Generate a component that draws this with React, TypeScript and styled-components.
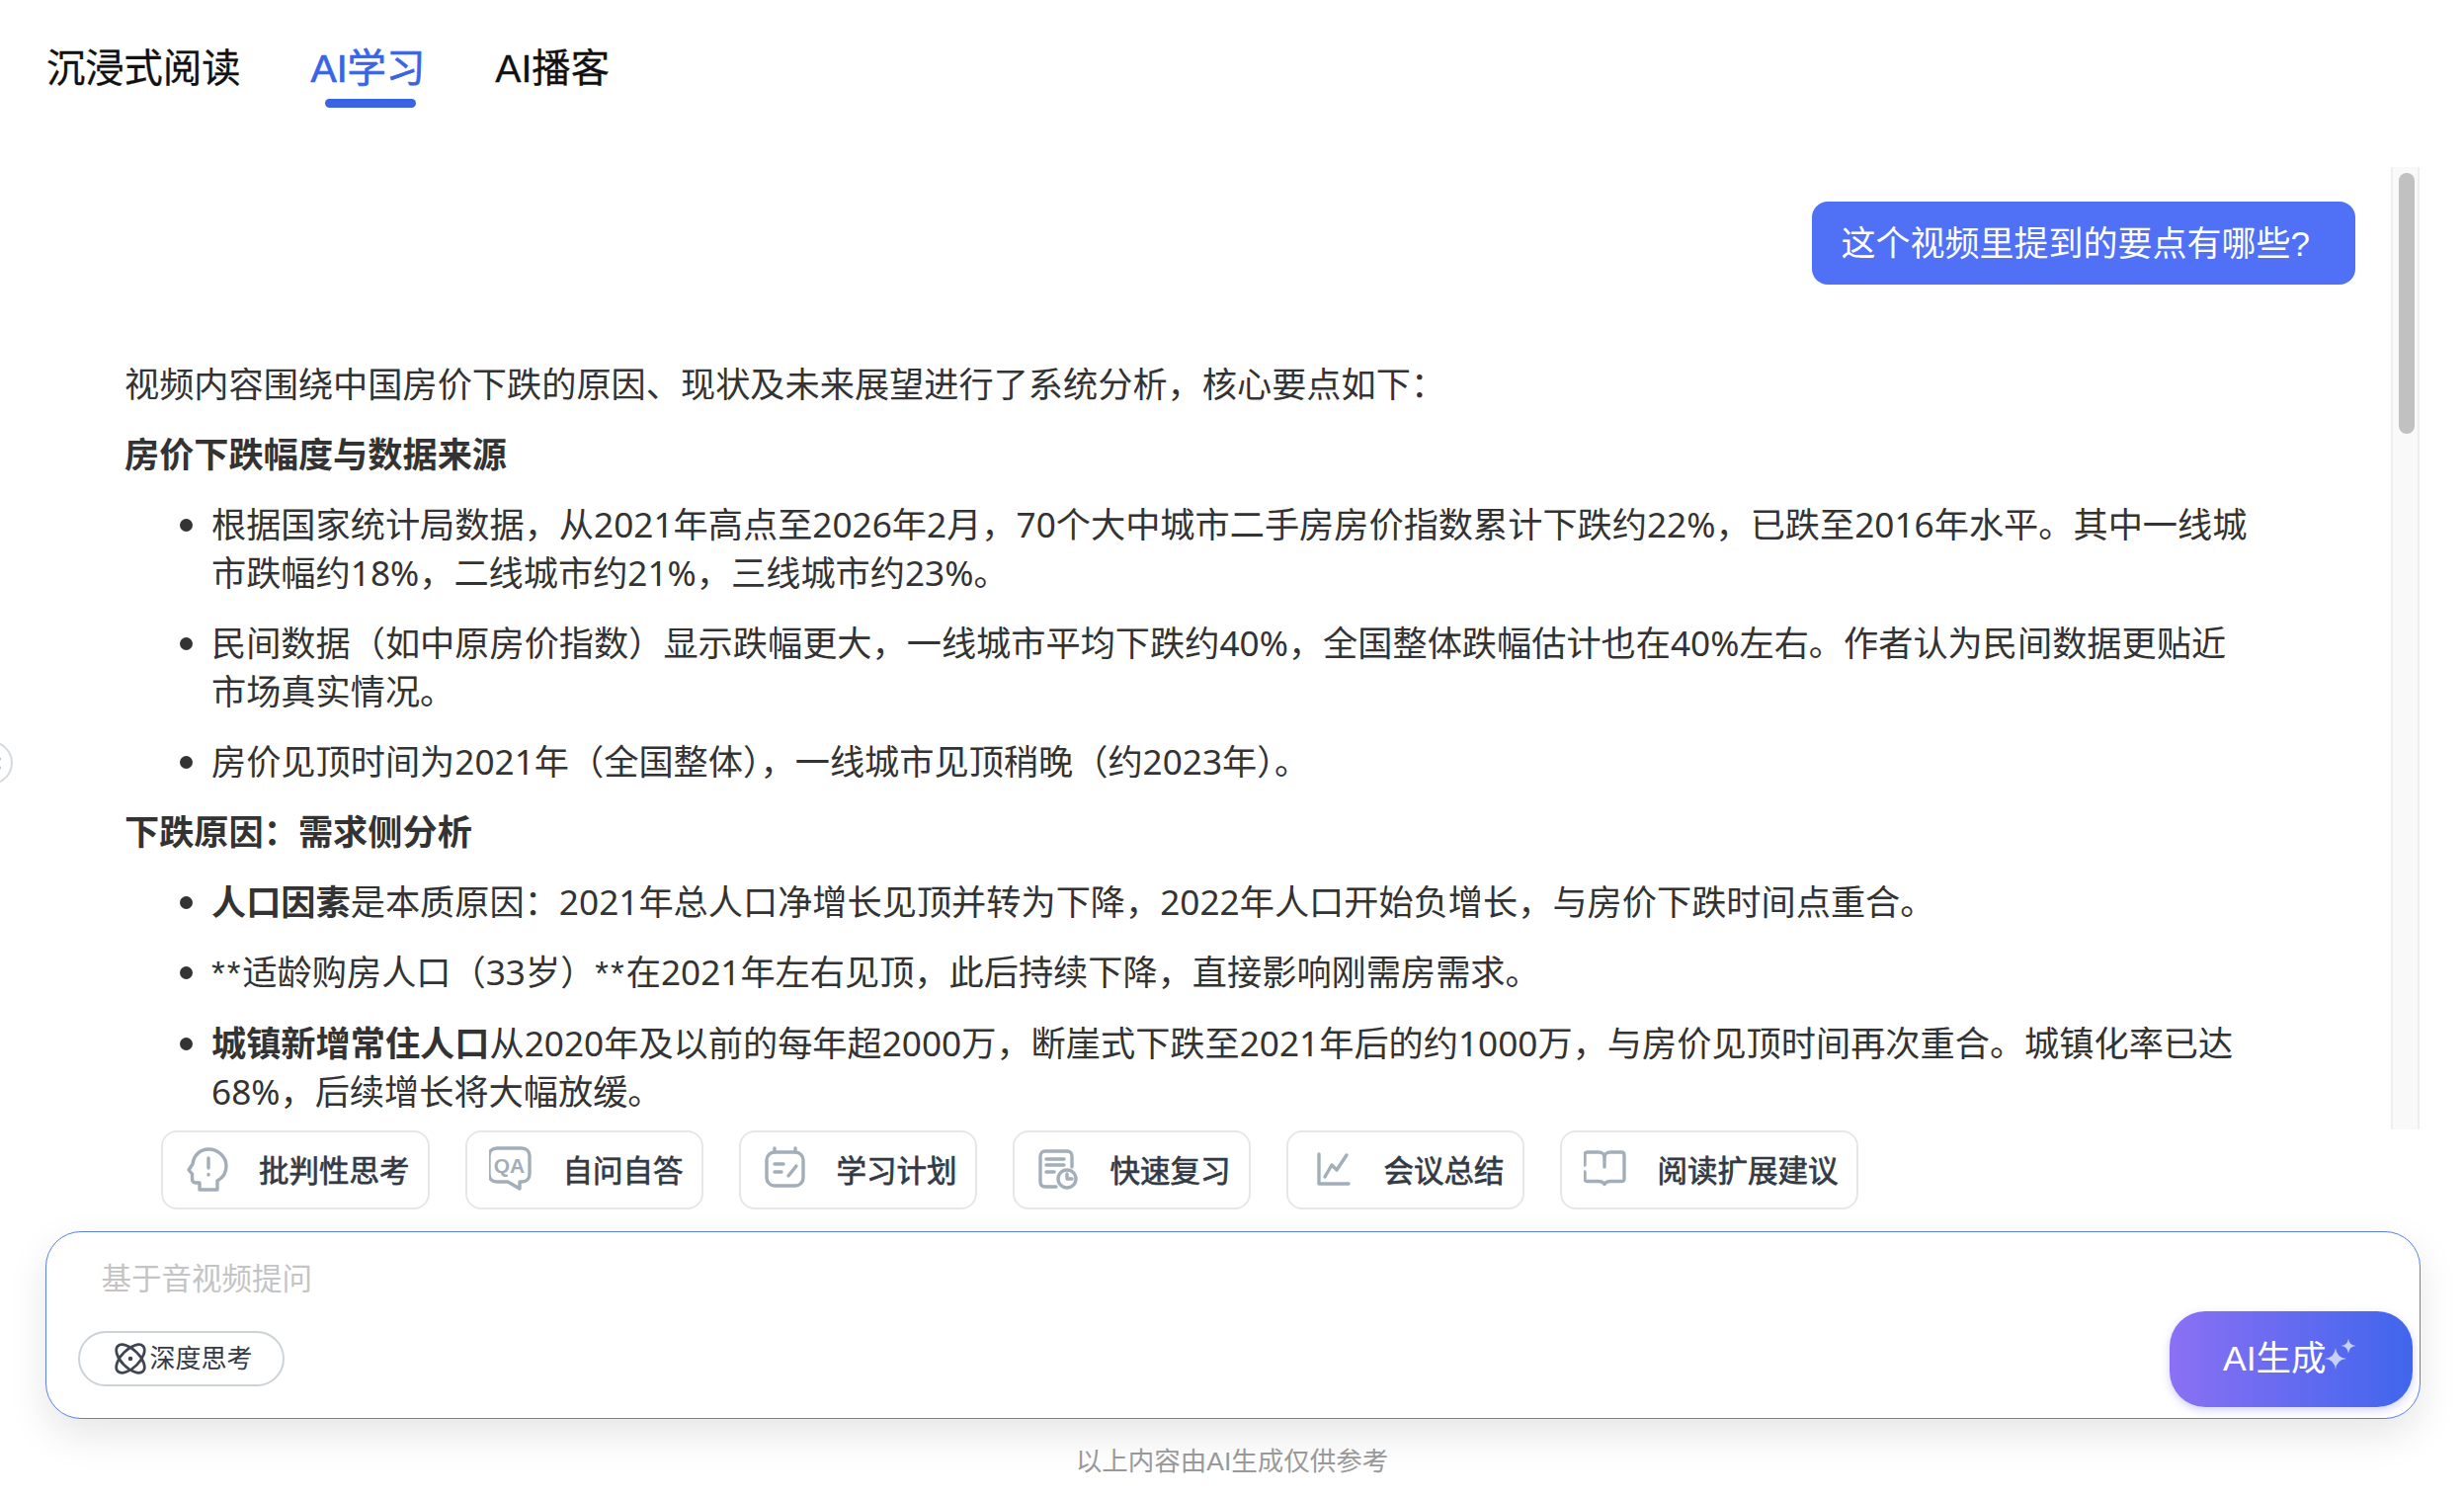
import React from 'react';
import styled, { createGlobalStyle } from 'styled-components';

const GlobalStyle = createGlobalStyle`
  html, body {
    margin: 0;
    padding: 0;
    background: #fff;
  }
  body {
    font-family: "Liberation Sans", "Noto Sans CJK SC", sans-serif;
  }
`;

const Page = styled.div`
  position: relative;
  width: 2494px;
  height: 1516px;
  overflow: hidden;
  background: #fff;
  display: flex;
  flex-direction: column;
`;

const TabBar = styled.nav`
  height: 169px;
  box-sizing: border-box;
  padding: 41px 0 0 47px;
  display: flex;
  gap: 71px;
  align-items: flex-start;
`;

const Tab = styled.div<{ $active?: boolean }>`
  display: flex;
  flex-direction: column;
  font-size: 39.3px;
  line-height: 56px;
  -webkit-text-stroke: ${(p) => (p.$active ? '0.7px #3b64e4' : '0.3px #111')};
  color: ${(p) => (p.$active ? '#3b64e4' : '#111')};

  &::after {
    content: '';
    display: block;
    width: 92px;
    height: 9px;
    margin: 3px 0 0 15px;
    border-radius: 5px;
    background: ${(p) => (p.$active ? '#3b64e4' : 'transparent')};
  }
`;

const ChatRow = styled.div`
  height: 974px;
  display: flex;
  overflow: hidden;
`;

const Messages = styled.div`
  flex: 1;
  min-width: 0;
  box-sizing: border-box;
  padding: 35px 36px 0 126px;
  color: #333;
  font-size: 35px;
  line-height: 49px;
`;

const UserBubble = styled.div`
  width: fit-content;
  height: 84px;
  margin-left: auto;
  margin-bottom: 76px;
  padding: 0 46px 0 30px;
  display: flex;
  align-items: center;
  border-radius: 16px;
  background: #5070f6;
  color: #fff;
`;

const Answer = styled.div`
  padding-right: 100px;
  font-family: "Noto Sans", "Noto Sans CJK SC", sans-serif;
  font-size: 35.2px;
`;

const Para = styled.p`
  margin: 0 0 22px;
`;

const BulletList = styled.ul`
  margin: 0 0 22px;
  padding-left: 88px;
  list-style: disc;
`;

const Bullet = styled.li`
  margin-bottom: 22px;

  &:last-child {
    margin-bottom: 0;
  }
`;

const Strong = styled.strong`
  font-weight: 700;
`;

const Stars = styled.span`
  font-family: "Liberation Sans", sans-serif;
  letter-spacing: 2px;
`;

const ScrollTrack = styled.div`
  width: 29px;
  margin-right: 45px;
  box-sizing: border-box;
  border-left: 2px solid #eeeeee;
  border-right: 2px solid #eeeeee;
  background: #f9f9f9;
`;

const ScrollThumb = styled.div`
  width: 16px;
  height: 264px;
  margin: 6px 0 0 6px;
  border-radius: 8px;
  background: #c1c1c1;
`;

const ChipRow = styled.div`
  display: flex;
  gap: 36px;
  margin-top: 1px;
  padding-left: 163px;
`;

const Chip = styled.button`
  height: 80px;
  box-sizing: border-box;
  padding: 0 18px 2px 22px;
  display: flex;
  align-items: center;
  gap: 27px;
  border: 2px solid #e5e7eb;
  border-radius: 16px;
  background: #fff;
  color: #333a45;
  font-family: inherit;
  font-size: 30.5px;
  font-weight: 400;
  -webkit-text-stroke: 0.7px #333a45;
`;

const ChipIcon = styled.svg`
  width: 48px;
  height: 48px;
  flex: none;
  fill: none;
  stroke: #a3aebb;
  stroke-width: 3.4;
  stroke-linecap: round;
  stroke-linejoin: round;
`;

const Composer = styled.div`
  height: 190px;
  box-sizing: border-box;
  margin: 22px 44px 0 46px;
  padding: 0 7px 11.5px 31.5px;
  display: flex;
  justify-content: space-between;
  align-items: flex-end;
  border: 1.5px solid #5a80e8;
  border-radius: 36px;
  background: #fff;
  box-shadow: 0 16px 40px rgba(0, 0, 0, 0.1);
`;

const ComposerLeft = styled.div`
  display: flex;
  flex-direction: column;
  align-items: flex-start;
  padding-bottom: 21px;
`;

const PromptInput = styled.input`
  width: 1800px;
  height: 40px;
  margin: 0 0 32px 24px;
  padding: 0;
  border: 0;
  outline: 0;
  background: transparent;
  font-family: inherit;
  font-size: 30.5px;

  &::placeholder {
    color: #c4c4c4;
    opacity: 1;
  }
`;

const ThinkPill = styled.div`
  height: 56px;
  box-sizing: border-box;
  padding: 0 30px 4px 34px;
  display: flex;
  align-items: center;
  gap: 3px;
  border: 2px solid #cdd2da;
  border-radius: 28px;
  color: #333a45;
  font-size: 26px;
`;

const AtomIcon = styled.svg`
  width: 34px;
  height: 34px;
  margin-top: 4px;
  fill: none;
  stroke: #3f4652;
  stroke-width: 2.6;
`;

const GenerateButton = styled.button`
  width: 246px;
  height: 97px;
  padding: 0 0 7px 54px;
  display: flex;
  align-items: center;
  border: 0;
  border-radius: 36px;
  background: linear-gradient(90deg, #8b70f4 0%, #3f66ec 100%);
  box-shadow: 0 3px 8px rgba(100, 100, 240, 0.3);
  color: #fff;
  font-family: inherit;
  font-size: 35.5px;
`;

const Sparkles = styled.svg`
  width: 36px;
  height: 36px;
  margin: 0 0 0 -3px;
  fill: #c9d0f8;
`;

const Disclaimer = styled.div`
  margin-top: 25px;
  text-align: center;
  color: #999;
  font-size: 26.5px;
  line-height: 36px;
`;

const SideHandle = styled.div`
  position: absolute;
  left: -31px;
  top: 750px;
  width: 44px;
  height: 44px;
  box-sizing: border-box;
  padding-right: 10px;
  display: flex;
  flex-direction: column;
  align-items: flex-end;
  justify-content: center;
  gap: 5px;
  border: 2px solid #d5d9e0;
  border-radius: 50%;
  background: #fff;
`;

const HandleDot = styled.span`
  width: 4px;
  height: 4px;
  border-radius: 50%;
  background: #b9bec8;
`;

export default function App() {
  return (
    <Page>
      <GlobalStyle />
      <TabBar>
        <Tab>沉浸式阅读</Tab>
        <Tab $active>AI学习</Tab>
        <Tab>AI播客</Tab>
      </TabBar>

      <ChatRow>
        <Messages>
          <UserBubble>这个视频里提到的要点有哪些?</UserBubble>
          <Answer>
            <Para>视频内容围绕中国房价下跌的原因、现状及未来展望进行了系统分析&#xFF0C;核心要点如下&#xFF1A;</Para>
            <Para><Strong>房价下跌幅度与数据来源</Strong></Para>
            <BulletList>
              <Bullet>根据国家统计局数据&#xFF0C;从2021年高点至2026年2月&#xFF0C;70个大中城市二手房房价指数累计下跌约22%&#xFF0C;已跌至2016年水平。其中一线城市跌幅约18%&#xFF0C;二线城市约21%&#xFF0C;三线城市约23%。</Bullet>
              <Bullet>民间数据&#xFF08;如中原房价指数&#xFF09;显示跌幅更大&#xFF0C;一线城市平均下跌约40%&#xFF0C;全国整体跌幅估计也在40%左右。作者认为民间数据更贴近市场真实情况。</Bullet>
              <Bullet>房价见顶时间为2021年&#xFF08;全国整体&#xFF09;&#xFF0C;一线城市见顶稍晚&#xFF08;约2023年&#xFF09;。</Bullet>
            </BulletList>
            <Para><Strong>下跌原因&#xFF1A;需求侧分析</Strong></Para>
            <BulletList>
              <Bullet><Strong>人口因素</Strong>是本质原因&#xFF1A;2021年总人口净增长见顶并转为下降&#xFF0C;2022年人口开始负增长&#xFF0C;与房价下跌时间点重合。</Bullet>
              <Bullet><Stars>**</Stars>适龄购房人口&#xFF08;33岁&#xFF09;<Stars>**</Stars>在2021年左右见顶&#xFF0C;此后持续下降&#xFF0C;直接影响刚需房需求。</Bullet>
              <Bullet><Strong>城镇新增常住人口</Strong>从2020年及以前的每年超2000万&#xFF0C;断崖式下跌至2021年后的约1000万&#xFF0C;与房价见顶时间再次重合。城镇化率已达68%&#xFF0C;后续增长将大幅放缓。</Bullet>
            </BulletList>
          </Answer>
        </Messages>
        <ScrollTrack>
          <ScrollThumb />
        </ScrollTrack>
      </ChatRow>

      <ChipRow>
        <Chip>
          <ChipIcon viewBox="0 0 48 48">
            <path d="M15 45V38H11C8.5 38 7.5 36 7.5 34V29L4 25L8 19C9 10 16 4 24 4C33 4 42 11 42 21C42 28 38.5 33 33 36V45H15Z" />
            <path d="M24 13V23" />
            <path d="M24 29.5V30" />
          </ChipIcon>
          批判性思考
        </Chip>
        <Chip>
          <ChipIcon viewBox="3 0 48 48">
            <path d="M11 3H36C41 3 44 6 44 11V29C44 34 41 37 36 37H34V44L22 37H11C6 37 3 34 3 29V11C3 6 6 3 11 3Z" />
            <text x="23.5" y="27.5" textAnchor="middle" fontFamily="Liberation Sans" fontSize="21" fontWeight="700" fill="#a3aebb" stroke="none">QA</text>
          </ChipIcon>
          自问自答
        </Chip>
        <Chip>
          <ChipIcon viewBox="0 0 48 48">
            <rect x="4" y="7" width="37" height="34" rx="8" />
            <path d="M12 3V7M33 3V7" />
            <path d="M12 19H21M12 27H19" />
            <path d="M26 31L34 21" />
          </ChipIcon>
          学习计划
        </Chip>
        <Chip>
          <ChipIcon viewBox="0 0 48 48">
            <path d="M20 42H9C5.5 42 4 40 4 37V11C4 8 6 6 9 6H31C34 6 36 8 36 11V22" />
            <path d="M10 14H28M10 20H28M10 27H18" />
            <circle cx="31" cy="34" r="9" />
            <path d="M31 29V34H36" />
          </ChipIcon>
          快速复习
        </Chip>
        <Chip>
          <ChipIcon viewBox="0 0 48 48">
            <path d="M9 9V39H39" />
            <path d="M15 32L22 20L27 25L37 10" />
          </ChipIcon>
          会议总结
        </Chip>
        <Chip>
          <ChipIcon viewBox="2 0 48 48">
            <path d="M3 20V10C3 8 4 7 6 7H17C20 7 23 9 23 12V22" />
            <path d="M3 27V34C3 36 4 36.5 6 36.5H17C20 36.5 22 37.5 23 39.5C24 37.5 26 36.5 29 36.5H40C42 36.5 43 36 43 34V10C43 8 42 7 40 7H29C26 7 23 9 23 12" />
          </ChipIcon>
          阅读扩展建议
        </Chip>
      </ChipRow>

      <Composer>
        <ComposerLeft>
          <PromptInput placeholder="基于音视频提问" readOnly />
          <ThinkPill>
            <AtomIcon viewBox="0 0 32 32">
              <ellipse cx="16" cy="16" rx="8.5" ry="17" transform="rotate(45 16 16)" />
              <ellipse cx="16" cy="16" rx="8.5" ry="17" transform="rotate(-45 16 16)" />
              <circle cx="16" cy="16" r="2.2" fill="#3f4652" stroke="none" />
            </AtomIcon>
            深度思考
          </ThinkPill>
        </ComposerLeft>
        <GenerateButton>
          AI生成
          <Sparkles viewBox="0 0 36 36">
            <path d="M12 10Q13 20 23 21Q13 22 12 32Q11 22 1 21Q11 20 12 10Z" />
            <path d="M25 .5Q25.7 7.3 32.5 8Q25.7 8.7 25 15.5Q24.3 8.7 17.5 8Q24.3 7.3 25 .5Z" />
          </Sparkles>
        </GenerateButton>
      </Composer>

      <Disclaimer>以上内容由AI生成仅供参考</Disclaimer>

      <SideHandle>
        <HandleDot />
        <HandleDot />
      </SideHandle>
    </Page>
  );
}
